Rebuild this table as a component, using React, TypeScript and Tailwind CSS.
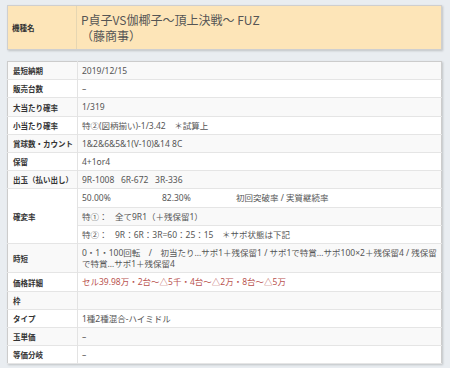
import React from "react";

const Label = ({ children, rowSpan }: { children: React.ReactNode; rowSpan?: number }) => (
  <td
    rowSpan={rowSpan}
    className="w-[70px] border-r border-[#e3e3e3] pl-[5px] pr-[2px] align-middle text-[7.5px] font-bold leading-[11px] text-[#333] font-['Noto_Sans_CJK_JP',sans-serif] whitespace-nowrap"
  >
    {children}
  </td>
);

const Val = ({ children, className = "" }: { children?: React.ReactNode; className?: string }) => (
  <td className={"pl-[4px] py-[3px] align-middle text-[8.5px] leading-[11.2px] text-[#555] whitespace-nowrap " + className}>
    {children}
  </td>
);

export default function App() {
  return (
    <div className="w-[450px] h-[368px] bg-[#e9edf1] pt-[5px] pl-[7px] overflow-hidden font-['Noto_Sans','Noto_Sans_CJK_JP',sans-serif]">
      <div className="w-[435px] h-[45px] flex bg-[#fde5b8] border border-[#cfcfcf] shadow-[1px_1px_2px_rgba(0,0,0,0.18)]">
        <div className="w-[69px] shrink-0 border-r border-[#e6d6b2] flex items-center pl-[4px] text-[7.5px] font-bold text-[#333] font-['Noto_Sans_CJK_JP',sans-serif]">
          機種名
        </div>
        <div className="pl-[4px] flex flex-col justify-center text-[12px] leading-[16px] text-[#555] font-['Noto_Sans_CJK_JP',sans-serif]">
          <div>P貞子VS伽椰子～頂上決戦～ FUZ</div>
          <div>（藤商事）</div>
        </div>
      </div>

      <table className="mt-[11px] w-[435px] border-collapse border border-[#cccccc] bg-white shadow-[1px_1px_2px_rgba(0,0,0,0.18)]">
        <tbody className="[&>tr]:border-b [&>tr]:border-[#e5e5e5] [&>tr:nth-child(odd)]:bg-[#f9f9f9]">
          <tr>
            <Label>最短納期</Label>
            <Val>2019/12/15</Val>
          </tr>
          <tr>
            <Label>販売台数</Label>
            <Val>–</Val>
          </tr>
          <tr>
            <Label>大当たり確率</Label>
            <Val>1/319</Val>
          </tr>
          <tr>
            <Label>小当たり確率</Label>
            <Val>特②(図柄揃い)-1/3.42　＊試算上</Val>
          </tr>
          <tr>
            <Label>賞球数・カウント</Label>
            <Val>1&amp;2&amp;6&amp;5&amp;1(V-10)&amp;14 8C</Val>
          </tr>
          <tr>
            <Label>保留</Label>
            <Val>4+1or4</Val>
          </tr>
          <tr>
            <Label>出玉（払い出し）</Label>
            <Val>9R-1008&nbsp;&nbsp;&nbsp;6R-672&nbsp;&nbsp;&nbsp;3R-336</Val>
          </tr>
          <tr>
            <Label rowSpan={3}>確変率</Label>
            <Val>
              <span className="inline-block w-[80px]">50.00%</span>
              <span className="inline-block w-[74px]">82.30%</span>
              <span>初回突破率 / 実質継続率</span>
            </Val>
          </tr>
          <tr>
            <Val>
              <span className="inline-block w-[33px]">特①：</span>
              全て9R1（＋残保留1）
            </Val>
          </tr>
          <tr>
            <Val>
              <span className="inline-block w-[33px]">特②：</span>
              9R：6R：3R=60：25：15　＊サポ状態は下記
            </Val>
          </tr>
          <tr>
            <Label>時短</Label>
            <Val>
              0・1・100回転　/　初当たり…サポ1＋残保留1 / サポ1で特賞…サポ100×2＋残保留4 / 残保留
              <br />
              で特賞…サポ1＋残保留4
            </Val>
          </tr>
          <tr>
            <Label>価格詳細</Label>
            <Val className="!text-[#b9534f]">セル39.98万・2台～△5千・4台～△2万・8台～△5万</Val>
          </tr>
          <tr>
            <Label>枠</Label>
            <Val>&nbsp;</Val>
          </tr>
          <tr>
            <Label>タイプ</Label>
            <Val>1種2種混合-ハイミドル</Val>
          </tr>
          <tr>
            <Label>玉単価</Label>
            <Val>–</Val>
          </tr>
          <tr>
            <Label>等価分岐</Label>
            <Val>–</Val>
          </tr>
        </tbody>
      </table>
    </div>
  );
}
